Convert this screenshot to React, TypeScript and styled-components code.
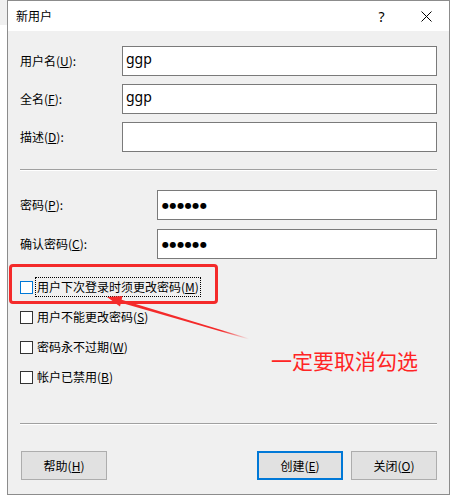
import React from "react";
import styled, { createGlobalStyle } from "styled-components";

const Global = createGlobalStyle`
  html, body { margin: 0; padding: 0; background: #ffffff; }
  body { font-family: "Noto Sans CJK SC", "Noto Sans", sans-serif; color: #000; }
  * { box-sizing: border-box; }
`;

const Page = styled.div`
  position: relative;
  width: 457px;
  height: 502px;
  display: flex;
  align-items: flex-start;
  overflow: hidden;
`;

const Gutter = styled.div`
  flex: none;
  width: 7px;
  height: 25px;
  background: #f0f0f0;
`;

const Window = styled.div`
  flex: none;
  width: 443px;
  height: 495px;
  border: 1px solid #8c8c8c;
  background: #f0f0f0;
  display: flex;
  flex-direction: column;
`;

const TitleBar = styled.div`
  flex: none;
  height: 30px;
  background: #ffffff;
  display: flex;
  align-items: center;
  padding-left: 8px;
`;

const Title = styled.div`
  flex: 1;
  font-size: 12px;
  line-height: 16px;
`;

const CaptionButton = styled.div`
  width: 45px;
  height: 30px;
  display: flex;
  align-items: center;
  justify-content: center;
  font-family: "Noto Sans", sans-serif;
  font-size: 14px;
  color: #000;
`;

const Body = styled.div`
  flex: 1;
  display: flex;
  flex-direction: column;
  padding: 15px 12px 14px 12px;
`;

const Group = styled.div<{ $gap: number; $top?: number }>`
  display: flex;
  flex-direction: column;
  gap: ${(p) => p.$gap}px;
  margin-top: ${(p) => p.$top ?? 0}px;
`;

const FieldRow = styled.div<{ $labelWidth: number }>`
  display: grid;
  grid-template-columns: ${(p) => p.$labelWidth}px 1fr;
  align-items: center;
  height: 30px;
`;

const Label = styled.div`
  font-size: 12px;
  line-height: 16px;
  white-space: nowrap;
`;

const Input = styled.div`
  height: 30px;
  border: 1px solid #7a7a7a;
  background: #ffffff;
  padding: 3px 3px 0 3px;
  font-family: "Noto Sans", sans-serif;
  font-size: 14px;
  line-height: 17px;
  color: #000;
`;

const Dots = styled.span`
  display: inline-block;
  margin-top: 2px;
  margin-left: 1px;
  font-family: "DejaVu Sans", sans-serif;
  font-size: 8px;
  letter-spacing: 0.6px;
  line-height: 10px;
  color: #000;
`;

const Separator = styled.div<{ $top: number }>`
  height: 1px;
  background: #a0a0a0;
  margin-top: ${(p) => p.$top}px;
  box-shadow: 0 1px 0 #ffffff;
`;

const CheckRow = styled.div`
  display: flex;
  align-items: center;
  height: 20px;
`;

const Box = styled.div<{ $focus?: boolean }>`
  flex: none;
  width: 13px;
  height: 13px;
  border: 1px solid ${(p) => (p.$focus ? "#0078d7" : "#333333")};
  background: #ffffff;
  margin-right: 2px;
`;

const CheckText = styled.span<{ $focus?: boolean }>`
  font-size: 12px;
  line-height: 18px;
  padding: 0 1px;
  border: 1px dotted ${(p) => (p.$focus ? "#000" : "transparent")};
  white-space: nowrap;
`;

const Footer = styled.div`
  margin-top: auto;
  display: flex;
  flex-direction: column;
`;

const ButtonRow = styled.div`
  display: flex;
  align-items: center;
  margin-top: 27px;
  padding-left: 1px;
`;

const Spacer = styled.div`
  flex: 1;
`;

const Button = styled.div<{ $primary?: boolean }>`
  width: 86px;
  height: 29px;
  display: flex;
  align-items: center;
  justify-content: center;
  background: #e1e1e1;
  border: ${(p) => (p.$primary ? "2px solid #0078d7" : "1px solid #adadad")};
  font-size: 12px;
  line-height: 16px;
  & + & {
    margin-left: 8px;
  }
`;

const Annotation = styled.div`
  position: absolute;
  left: 9px;
  top: 264px;
  width: 209px;
  height: 40px;
  border: 3px solid #f42a2a;
  border-radius: 4px;
  pointer-events: none;
`;

const ArrowLayer = styled.svg`
  position: absolute;
  left: 0;
  top: 0;
  pointer-events: none;
`;

const Note = styled.div`
  position: absolute;
  left: 271px;
  top: 348px;
  font-size: 21px;
  line-height: 24px;
  color: #ff2424;
  white-space: nowrap;
  pointer-events: none;
`;

const fields1 = [
  { label: "用户名", key: "U", value: "ggp" },
  { label: "全名", key: "F", value: "ggp" },
  { label: "描述", key: "D", value: "" },
];

const fields2 = [
  { label: "密码", key: "P" },
  { label: "确认密码", key: "C" },
];

const checks = [
  { label: "用户下次登录时须更改密码", key: "M", focus: true },
  { label: "用户不能更改密码", key: "S" },
  { label: "密码永不过期", key: "W" },
  { label: "帐户已禁用", key: "B" },
];

export default function App() {
  return (
    <>
      <Global />
      <Page>
        <Gutter />
        <Window>
          <TitleBar>
            <Title>新用户</Title>
            <CaptionButton>?</CaptionButton>
            <CaptionButton>
              <svg width="11" height="11" viewBox="0 0 11 11">
                <path d="M0.5 0.5 L10.5 10.5 M10.5 0.5 L0.5 10.5" stroke="#000" strokeWidth="1" fill="none" />
              </svg>
            </CaptionButton>
          </TitleBar>
          <Body>
            <Group $gap={8}>
              {fields1.map((f) => (
                <FieldRow key={f.key} $labelWidth={102}>
                  <Label>
                    {f.label}(<u>{f.key}</u>):
                  </Label>
                  <Input>{f.value}</Input>
                </FieldRow>
              ))}
            </Group>
            <Separator $top={17} />
            <Group $gap={9} $top={20}>
              {fields2.map((f) => (
                <FieldRow key={f.key} $labelWidth={137}>
                  <Label>
                    {f.label}(<u>{f.key}</u>):
                  </Label>
                  <Input>
                    <Dots>●●●●●●</Dots>
                  </Input>
                </FieldRow>
              ))}
            </Group>
            <Group $gap={10} $top={18}>
              {checks.map((c) => (
                <CheckRow key={c.key}>
                  <Box $focus={c.focus} />
                  <CheckText $focus={c.focus}>
                    {c.label}(<u>{c.key}</u>)
                  </CheckText>
                </CheckRow>
              ))}
            </Group>
            <Footer>
              <Separator $top={0} />
              <ButtonRow>
                <Button>
                  帮助(<u>H</u>)
                </Button>
                <Spacer />
                <Button $primary>
                  创建(<u>E</u>)
                </Button>
                <Button>
                  关闭(<u>O</u>)
                </Button>
              </ButtonRow>
            </Footer>
          </Body>
        </Window>
        <Annotation />
        <ArrowLayer width="457" height="502" viewBox="0 0 457 502">
          <defs>
            <linearGradient id="fade" gradientUnits="userSpaceOnUse" x1="110" y1="298" x2="249" y2="339">
              <stop offset="0" stopColor="#f42a2a" stopOpacity="1" />
              <stop offset="0.8" stopColor="#f42a2a" stopOpacity="1" />
              <stop offset="1" stopColor="#f42a2a" stopOpacity="0" />
            </linearGradient>
          </defs>
          <polygon points="120,299.3 121,302.7 249,339.6 249.3,338.6" fill="url(#fade)" />
          <polygon points="107,297 122.5,296 120,306.5" fill="#f42a2a" />
        </ArrowLayer>
        <Note>一定要取消勾选</Note>
      </Page>
    </>
  );
}
